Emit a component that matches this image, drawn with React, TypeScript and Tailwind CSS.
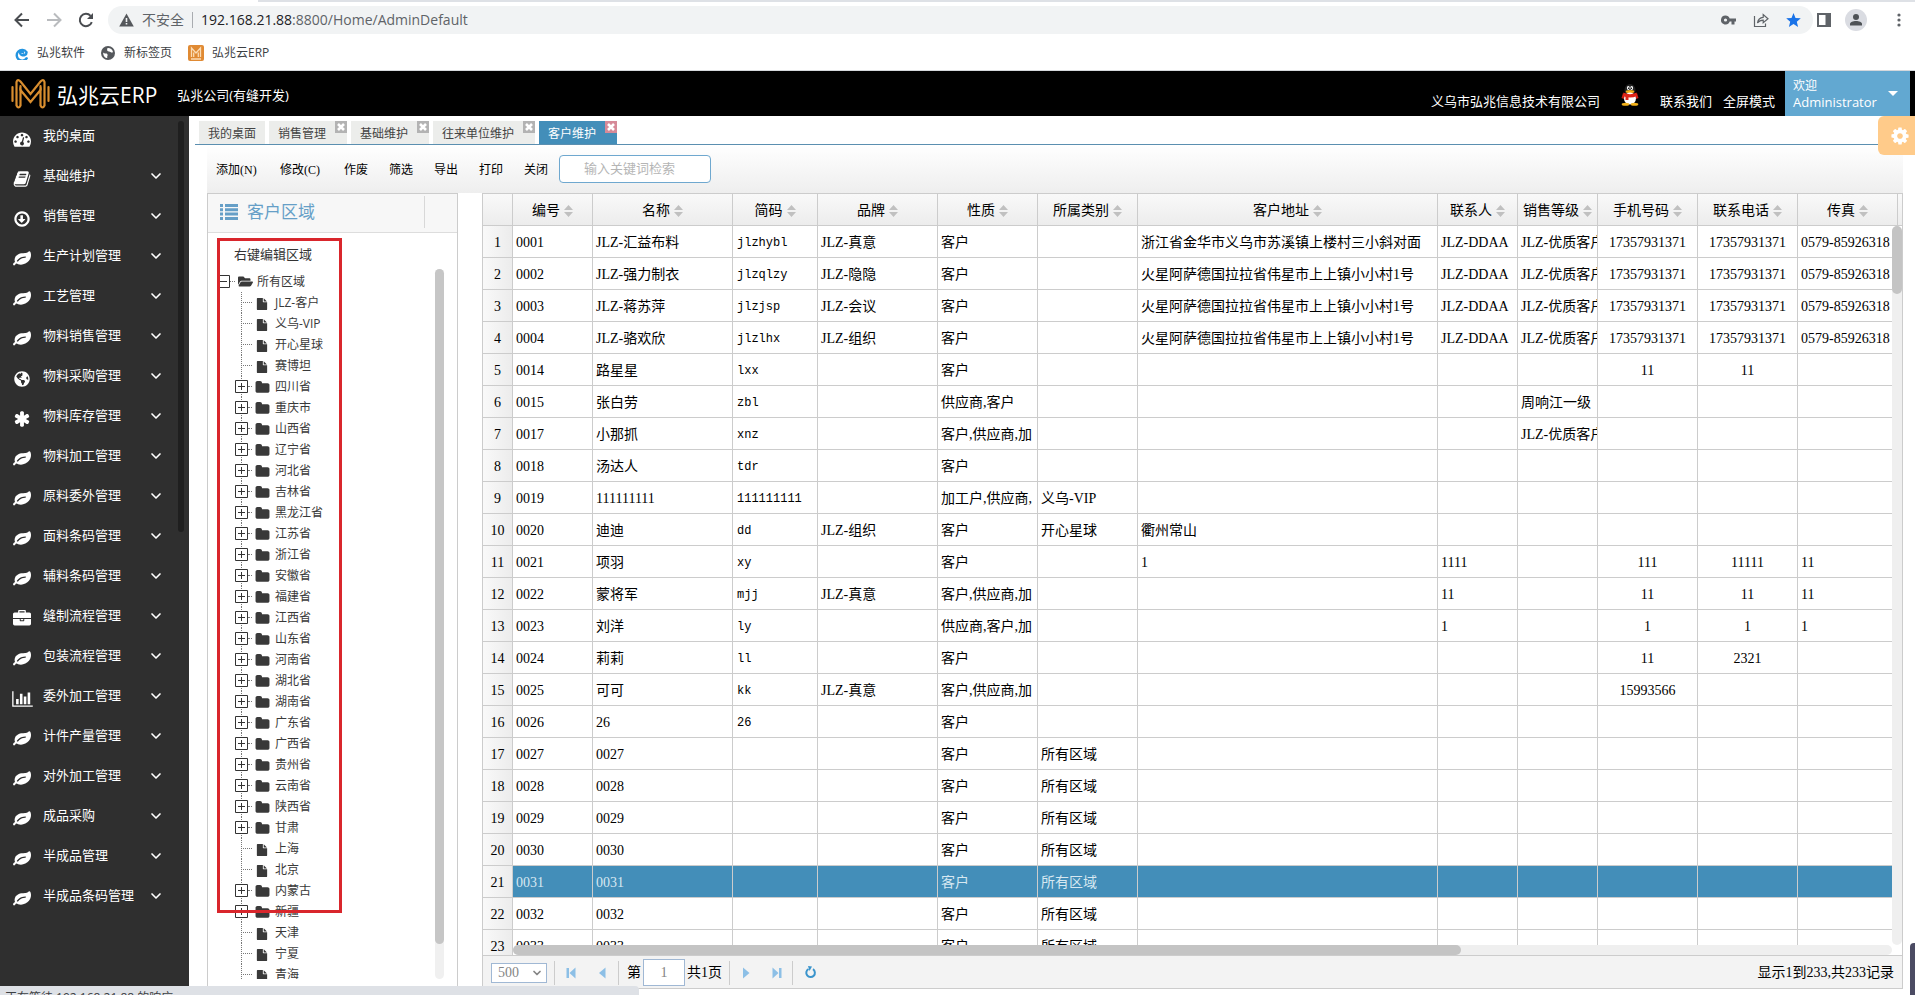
import { useState } from "react";
import type { ReactNode } from "react";
import { FaFolderOpen, FaGlobeAmericas } from "react-icons/fa";
import { ChevronDown } from "lucide-react";

const UI = "font-['Open_Sans','Noto_Sans_CJK_SC',sans-serif]";
const SONG = "font-['Liberation_Serif','Noto_Sans_CJK_SC',serif]";

const icons: Record<string, string> = {
  dashboard:
    "M384 1152q0-53-37.5-90.5t-90.5-37.5-90.5 37.5-37.5 90.5 37.5 90.5 90.5 37.5 90.5-37.5 37.5-90.5zm192-448q0-53-37.5-90.5t-90.5-37.5-90.5 37.5-37.5 90.5 37.5 90.5 90.5 37.5 90.5-37.5 37.5-90.5zm428 481l101-382q6-26-7.5-48.5t-38.5-29.5-48 6.5-30 39.5l-101 382q-60 5-107 43.5t-63 98.5q-20 77 20 146t117 89 146-20 89-117q16-60-6-117t-72-91zm660-33q0-53-37.5-90.5t-90.5-37.5-90.5 37.5-37.5 90.5 37.5 90.5 90.5 37.5 90.5-37.5 37.5-90.5zm-640-640q0-53-37.5-90.5t-90.5-37.5-90.5 37.5-37.5 90.5 37.5 90.5 90.5 37.5 90.5-37.5 37.5-90.5zm448 192q0-53-37.5-90.5t-90.5-37.5-90.5 37.5-37.5 90.5 37.5 90.5 90.5 37.5 90.5-37.5 37.5-90.5zm320 448q0 261-141 483-19 29-54 29h-1402q-35 0-54-29-141-221-141-483 0-182 71-348t191-286 286-191 348-71 348 71 286 191 191 286 71 348z",
  book: "M1703 478q40 57 18 129l-275 906q-19 64-76.5 107.5t-122.5 43.5h-923q-77 0-148.5-53.5t-99.5-131.5q-24-67-2-127 0-4 3-27t4-37q1-8-3-21.5t-3-19.5q2-11 8-21t16.5-23.5 16.5-23.5q23-38 45-91.5t30-91.5q3-10 .5-30t-.5-28q3-11 17-28t17-23q21-36 42-92t25-90q1-9-2.5-32t.5-28q4-13 22-30.5t22-22.5q19-26 42.5-84.5t27.5-96.5q1-8-3-25.5t-2-26.5q2-8 9-18t18-23 17-21q8-12 16.5-30.5t15-35 16-36 19.5-32 26.5-23.5 36-11.5 47.5 5.5l-1 3q38-9 51-9h761q74 0 114 56t18 130l-274 906q-36 119-71.5 153.5t-128.5 34.5h-869q-27 0-38 15-11 16-1 43 24 70 144 70h923q29 0 56-15.5t35-41.5l300-987q7-22 5-57 38 15 59 43zm-1064 2q-4 13 2 22.5t20 9.5h608q13 0 25.5-9.5t16.5-22.5l21-64q4-13-2-22.5t-20-9.5h-608q-13 0-25.5 9.5t-16.5 22.5zm-83 256q-4 13 2 22.5t20 9.5h608q13 0 25.5-9.5t16.5-22.5l21-64q4-13-2-22.5t-20-9.5h-608q-13 0-25.5 9.5t-16.5 22.5z",
  down: "M1216 928q0 14-10 24l-319 319q-10 9-23 9t-23-9l-320-320q-15-16-7-35 8-20 30-20h192v-352q0-14 9-23t23-9h192q14 0 23 9t9 23v352h192q14 0 23 9t9 23zm-320-576q-148 0-273 73t-198 198-73 273 73 273 198 198 273 73 273-73 198-198 73-273-73-273-198-198-273-73zm768 544q0 209-103 385.5t-279.5 279.5-385.5 103-385.5-103-279.5-279.5-103-385.5 103-385.5 279.5-279.5 385.5-103 385.5 103 279.5 279.5 103 385.5z",
  leaf: "M1280 704q0-26-19-45t-45-19q-172 0-318 49.5t-259.5 134-235.5 219.5q-19 21-19 45 0 26 19 45t45 19q24 0 45-19 27-24 74-71t67-66q137-124 268.5-176t313.5-52q26 0 45-19t19-45zm512-198q0 95-20 193-46 224-184.5 383t-357.5 268q-214 108-438 108-148 0-286-47-15-5-88-42t-96-37q-16 0-39.5 32t-45 70-52.5 70-60 32q-43 0-63.5-17.5t-45.5-59.5q-2-4-6-11t-5.5-10-3-9.5-1.5-13.5q0-35 31-73.5t68-65.5 68-56 31-48q0-4-14-38t-16-44q-9-51-9-104 0-115 43.5-220t119-184.5 170.5-139 204-95.5q55-18 145-25.5t179.5-9 178.5-6 163.5-24 113.5-56.5l29.5-29.5 29.5-28 27-20 36.5-16 43.5-4.5q39 0 70.5 46t47.5 112 24 124 8 96z",
  asterisk:
    "M1546 1050q46 26 59.5 77.5t-12.5 97.5l-64 110q-26 46-77.5 59.5t-97.5-12.5l-266-153v307q0 52-38 90t-90 38h-128q-52 0-90-38t-38-90v-307l-266 153q-46 26-97.5 12.5t-77.5-59.5l-64-110q-26-46-12.5-97.5t59.5-77.5l266-154-266-154q-46-26-59.5-77.5t12.5-97.5l64-110q26-46 77.5-59.5t97.5 12.5l266 153v-307q0-52 38-90t90-38h128q52 0 90 38t38 90v307l266-153q46-26 97.5-12.5t77.5 59.5l64 110q26 46 12.5 97.5t-59.5 77.5l-266 154z",
  briefcase:
    "M640 256h512v-128h-512v128zm1152 640v480q0 66-47 113t-113 47h-1472q-66 0-113-47t-47-113v-480h672v160q0 26 19 45t45 19h320q26 0 45-19t19-45v-160h672zm-768 0v128h-256v-128h256zm768-480v384h-1792v-384q0-66 47-113t113-47h352v-160q0-40 28-68t68-28h576q40 0 68 28t28 68v160h352q66 0 113 47t47 113z",
  folder:
    "M1728 608v704q0 92-66 158t-158 66h-1216q-92 0-158-66t-66-158v-960q0-92 66-158t158-66h320q92 0 158 66t66 158v32h672q92 0 158 66t66 158z",
  file: "M1152 512v-472q22 14 36 28l408 408q14 14 28 36h-472zm-128 32q0 40 28 68t68 28h544v1056q0 40-28 68t-68 28h-1344q-40 0-68-28t-28-68v-1600q0-40 28-68t68-28h800v544z",
  cog: "M1152 896q0-106-75-181t-181-75-181 75-75 181 75 181 181 75 181-75 75-181zm512-109v222q0 12-8 23t-20 13l-185 28q-19 54-39 91 35 50 107 138 10 12 10 25t-9 23q-27 37-99 108t-94 71q-12 0-26-9l-138-108q-44 23-91 38-16 136-29 186-7 28-36 28h-222q-14 0-24.5-8.5t-11.5-21.5l-28-184q-49-16-90-37l-141 107q-10 9-25 9-14 0-25-11-126-114-165-168-7-10-7-23 0-12 8-23 15-21 51-66.5t54-70.5q-27-50-41-99l-183-27q-13-2-21-12.5t-8-23.5v-222q0-12 8-23t19-13l186-28q14-46 39-92-40-57-107-138-10-12-10-24 0-10 9-23 26-36 98.5-107.5t94.5-71.5q13 0 26 10l138 107q44-23 91-38 16-136 29-186 7-28 36-28h222q14 0 24.5 8.5t11.5 21.5l28 184q49 16 90 37l142-107q9-9 24-9 13 0 25 10 129 119 165 170 7 8 7 22 0 12-8 23-15 21-51 66.5t-54 70.5q26 50 41 98l183 28q13 2 21 12.5t8 23.5z",
};

const Fa = ({ name, className }: { name: string; className?: string }) => (
  <svg viewBox="0 0 1792 1792" fill="currentColor" className={className} aria-hidden="true">
    <path d={icons[name]} />
  </svg>
);

const menu: [string, string][] = [
  ["dashboard", "我的桌面"],
  ["book", "基础维护"],
  ["down", "销售管理"],
  ["leaf", "生产计划管理"],
  ["leaf", "工艺管理"],
  ["leaf", "物料销售管理"],
  ["globe", "物料采购管理"],
  ["asterisk", "物料库存管理"],
  ["leaf", "物料加工管理"],
  ["leaf", "原料委外管理"],
  ["leaf", "面料条码管理"],
  ["leaf", "辅料条码管理"],
  ["briefcase", "缝制流程管理"],
  ["leaf", "包装流程管理"],
  ["chart", "委外加工管理"],
  ["leaf", "计件产量管理"],
  ["leaf", "对外加工管理"],
  ["leaf", "成品采购"],
  ["leaf", "半成品管理"],
  ["leaf", "半成品条码管理"],
];

const tabs = ["我的桌面", "销售管理", "基础维护", "往来单位维护", "客户维护"];
const tools = ["添加(N)", "修改(C)", "作废", "筛选", "导出", "打印", "关闭"];

const regions = [
  "JLZ-客户", "义乌-VIP", "开心星球", "赛博坦", "四川省", "重庆市", "山西省", "辽宁省", "河北省",
  "吉林省", "黑龙江省", "江苏省", "浙江省", "安徽省", "福建省", "江西省", "山东省", "河南省",
  "湖北省", "湖南省", "广东省", "广西省", "贵州省", "云南省", "陕西省", "甘肃", "上海", "北京",
  "内蒙古", "新疆", "天津", "宁夏", "青海",
];
const leaves = ["JLZ-客户", "义乌-VIP", "开心星球", "赛博坦", "上海", "北京", "天津", "宁夏", "青海"];

const columns = [
  { title: "编号", width: 80, cell: "pl-[3px]" },
  { title: "名称", width: 140, cell: "pl-[3px]" },
  { title: "简码", width: 85, cell: "pl-1 font-['Liberation_Mono',monospace] text-xs" },
  { title: "品牌", width: 120, cell: "pl-[3px]" },
  { title: "性质", width: 100, cell: "pl-[3px]" },
  { title: "所属类别", width: 100, cell: "pl-[3px]" },
  { title: "客户地址", width: 300, cell: "pl-[3px]" },
  { title: "联系人", width: 80, cell: "pl-[3px]" },
  { title: "销售等级", width: 80, cell: "pl-[3px]" },
  { title: "手机号码", width: 100, cell: "text-center" },
  { title: "联系电话", width: 100, cell: "text-center" },
  { title: "传真", width: 100, cell: "pl-[3px]" },
];

const mars = "火星阿萨德国拉拉省伟星市上上镇小小村1号";
const phone = "17357931371";
const fax = "0579-85926318";

const rows: string[][] = [
  ["0001", "JLZ-汇益布料", "jlzhybl", "JLZ-真意", "客户", "", "浙江省金华市义乌市苏溪镇上楼村三小斜对面", "JLZ-DDAA", "JLZ-优质客户", phone, phone, fax],
  ["0002", "JLZ-强力制衣", "jlzqlzy", "JLZ-隐隐", "客户", "", mars, "JLZ-DDAA", "JLZ-优质客户", phone, phone, fax],
  ["0003", "JLZ-蒋苏萍", "jlzjsp", "JLZ-会议", "客户", "", mars, "JLZ-DDAA", "JLZ-优质客户", phone, phone, fax],
  ["0004", "JLZ-骆欢欣", "jlzlhx", "JLZ-组织", "客户", "", mars, "JLZ-DDAA", "JLZ-优质客户", phone, phone, fax],
  ["0014", "路星星", "lxx", "", "客户", "", "", "", "", "11", "11", ""],
  ["0015", "张白劳", "zbl", "", "供应商,客户", "", "", "", "周响江一级", "", "", ""],
  ["0017", "小那抓", "xnz", "", "客户,供应商,加", "", "", "", "JLZ-优质客户", "", "", ""],
  ["0018", "汤达人", "tdr", "", "客户", "", "", "", "", "", "", ""],
  ["0019", "111111111", "111111111", "", "加工户,供应商,", "义乌-VIP", "", "", "", "", "", ""],
  ["0020", "迪迪", "dd", "JLZ-组织", "客户", "开心星球", "衢州常山", "", "", "", "", ""],
  ["0021", "项羽", "xy", "", "客户", "", "1", "1111", "", "111", "11111", "11"],
  ["0022", "蒙将军", "mjj", "JLZ-真意", "客户,供应商,加", "", "", "11", "", "11", "11", "11"],
  ["0023", "刘洋", "ly", "", "供应商,客户,加", "", "", "1", "", "1", "1", "1"],
  ["0024", "莉莉", "ll", "", "客户", "", "", "", "", "11", "2321", ""],
  ["0025", "可可", "kk", "JLZ-真意", "客户,供应商,加", "", "", "", "", "15993566", "", ""],
  ["0026", "26", "26", "", "客户", "", "", "", "", "", "", ""],
  ["0027", "0027", "", "", "客户", "所有区域", "", "", "", "", "", ""],
  ["0028", "0028", "", "", "客户", "所有区域", "", "", "", "", "", ""],
  ["0029", "0029", "", "", "客户", "所有区域", "", "", "", "", "", ""],
  ["0030", "0030", "", "", "客户", "所有区域", "", "", "", "", "", ""],
  ["0031", "0031", "", "", "客户", "所有区域", "", "", "", "", "", ""],
  ["0032", "0032", "", "", "客户", "所有区域", "", "", "", "", "", ""],
  ["0033", "0033", "", "", "客户", "所有区域", "", "", "", "", "", ""],
];

const BrowserBar = () => (
  <div className="shrink-0 border-b border-[#d5d8dc] bg-white">
    <div className="flex h-[2px]">
      <div className="w-[258px] rounded-tr-sm bg-white" />
      <div className="flex-1 bg-[#dee1e6]" />
    </div>
    <div className="flex h-9 items-center text-[#5f6368]">
      <div className="flex w-[108px] shrink-0 items-center gap-4 pl-[14px]">
        <button aria-label="后退">
          <svg width="16" height="16" viewBox="0 0 16 16" fill="none" stroke="#4a4d51" strokeWidth="2">
            <path d="M15 8H2M8 1.5L1.5 8L8 14.5" />
          </svg>
        </button>
        <button aria-label="前进">
          <svg width="16" height="16" viewBox="0 0 16 16" fill="none" stroke="#b9bbbe" strokeWidth="2">
            <path d="M1 8h13M8 1.5L14.5 8L8 14.5" />
          </svg>
        </button>
        <button aria-label="刷新">
          <svg width="16" height="16" viewBox="0 0 16 16" fill="none" stroke="#4a4d51" strokeWidth="2">
            <path d="M13.8 10.2A6.2 6.2 0 1 1 12.6 3.8" />
            <path d="M15 1v6H9z" fill="#4a4d51" stroke="none" />
          </svg>
        </button>
      </div>
      <div className="flex h-7 min-w-0 flex-1 items-center rounded-full bg-[#f1f3f4] pr-3 pl-[11px]">
        <svg width="15" height="14" viewBox="0 0 15 14" aria-hidden="true">
          <path d="M7.5 0.5L14.8 13.5H0.2z" fill="#55585c" />
          <path d="M6.7 5h1.6v4H6.7zM6.7 10h1.6v1.6H6.7z" fill="#f1f3f4" />
        </svg>
        <span className="ml-2 text-sm">不安全</span>
        <span className="mx-2 h-4 w-px bg-[#a9acb0]" />
        <span className="text-sm">
          <span className="text-[#202124]">192.168.21.88</span>:8800/Home/AdminDefault
        </span>
        <div className="ml-auto flex items-center gap-[17px]">
          <svg width="15" height="10" viewBox="0 0 15 10" aria-hidden="true">
            <path
              d="M4.5 0.5a4.5 4.5 0 1 0 4.2 6H10.5V9.5H13.5V6.5H15V3.5H8.7A4.5 4.5 0 0 0 4.5 0.5zM4.5 3.4a1.6 1.6 0 1 1 0 3.2a1.6 1.6 0 0 1 0-3.2z"
              fill="#5f6368"
              fillRule="evenodd"
            />
          </svg>
          <svg width="16" height="15" viewBox="0 0 16 15" fill="none" stroke="#5f6368" strokeWidth="1.2">
            <path d="M1.5 3V13.5H12.5V10.5" />
            <path d="M4.5 10C5 6.5 7 4.5 10.2 4.3V1.5L15 5.8L10.2 9.8V7.2C7.7 7.2 6 8 4.5 10z" />
          </svg>
          <svg width="15" height="14" viewBox="0 0 15 14" aria-hidden="true">
            <path d="M7.5 0L9.5 4.9L14.8 5.3L10.8 8.7L12.1 14L7.5 11.1L2.9 14L4.2 8.7L0.2 5.3L5.5 4.9z" fill="#1a73e8" />
          </svg>
        </div>
      </div>
      <div className="flex w-[102px] shrink-0 items-center justify-end gap-[14px] pr-3">
        <svg width="14" height="14" viewBox="0 0 14 14" aria-hidden="true">
          <path d="M0 0H14V14H0zM2 2V12H8.5V2z" fill="#5f6368" fillRule="evenodd" />
        </svg>
        <svg width="22" height="22" viewBox="0 0 22 22" aria-hidden="true">
          <circle cx="11" cy="11" r="11" fill="#dadce2" />
          <circle cx="11" cy="8" r="3" fill="#4e5256" />
          <path d="M5 16.5V15C5 13 8 12 11 12S17 13 17 15V16.5z" fill="#4e5256" />
        </svg>
        <svg width="22" height="14" viewBox="0 0 22 14" fill="#5f6368" aria-hidden="true">
          <circle cx="18" cy="2" r="1.6" />
          <circle cx="18" cy="7" r="1.6" />
          <circle cx="18" cy="12" r="1.6" />
        </svg>
      </div>
    </div>
    <nav className="flex h-8 items-center gap-4 pb-0.5 pl-[15px] text-xs text-[#3c4043]">
      <a href="#" className="flex items-center gap-[9px]">
        <svg width="13" height="13" viewBox="0 0 14 14" fill="none" stroke="#2394e0" strokeWidth="2.6">
          <path d="M13 11.2A5.800 5.800 0 1 1 12.4 5.5C12.600 8.500 9.500 9.200 7.500 8.700C5.500 8 5 6 6.500 5.200C8 4.500 9 6 8.500 7" />
        </svg>
        弘兆软件
      </a>
      <a href="#" className="flex items-center gap-[9px]">
        <svg width="14" height="14" viewBox="0 0 14 14" aria-hidden="true">
          <circle cx="7" cy="7" r="7" fill="#55585c" />
          <path d="M2.2 6.5C3.5 8.3 6 6.5 6.5 8.5S5.5 10.5 6.5 12C4 12 2 10 2.2 6.5zM6.5 2C9 1.8 11.5 3 12 6C10.5 7.5 9.5 5.5 8 5.5S5.5 4.5 6.5 2z" fill="#fff" />
        </svg>
        新标签页
      </a>
      <a href="#" className="flex items-center gap-2">
        <svg width="16" height="16" viewBox="0 0 16 16" fill="none" stroke="#fbdcb5" strokeWidth="1.3">
          <rect width="16" height="16" rx="2" fill="#e08a33" stroke="none" />
          <path d="M3.5 12V3L8 8L12.500 3V12M5.700 12V7.500M10.300 12V7.500M3 14h10" />
        </svg>
        弘兆云ERP
      </a>
    </nav>
  </div>
);

const Logo = () => (
  <svg width="39" height="32" viewBox="0 0 39 32" fill="none" stroke="#d98e2f" strokeWidth="2.2" strokeLinecap="round" aria-hidden="true">
    <path d="M1.500 9v14M37.500 9v14" />
    <path d="M5.500 27.500V4Q6.500 0.500 9.500 3.500L19.500 16L29.500 3.500Q32.500 0.500 33.500 4V27.500Q31.500 31.500 29.500 27.500V12L19.500 24L9.500 12V27.500Q7.500 31.500 5.500 27.500z" />
    <path d="M9.500 8v4M29.500 8v4" />
  </svg>
);

const Penguin = () => (
  <svg width="18" height="22" viewBox="0 0 18 22" aria-hidden="true">
    <ellipse cx="9" cy="6" rx="5.5" ry="6" fill="#222" />
    <ellipse cx="7.3" cy="4" rx="1.4" ry="2" fill="#fff" />
    <ellipse cx="10.7" cy="4" rx="1.4" ry="2" fill="#fff" />
    <circle cx="7.6" cy="4.2" r="0.7" fill="#000" />
    <circle cx="10.4" cy="4.2" r="0.7" fill="#000" />
    <ellipse cx="9" cy="7.5" rx="4.3" ry="1.5" fill="#f3b21b" />
    <path d="M2 9L0.5 14L3 15L4 11zM16 9L17.5 14L15 15L14 11z" fill="#c91c12" />
    <ellipse cx="9" cy="14.5" rx="6" ry="6" fill="#fff" />
    <path d="M2.5 8.5Q9 12 15.5 8.5L16 12Q9 15 2 12z" fill="#df2417" />
    <path d="M4.5 12h3v4h-3z" fill="#df2417" />
    <ellipse cx="4.5" cy="20.3" rx="3.8" ry="1.5" fill="#f3b21b" />
    <ellipse cx="13.5" cy="20.3" rx="3.8" ry="1.5" fill="#f3b21b" />
  </svg>
);

const Header = () => (
  <header className="flex h-[45px] shrink-0 items-center bg-black pr-[5px] pl-[11px] text-[13px] text-white">
    <Logo />
    <h1 className="ml-[7px] pt-0.5 text-[21px] leading-6">弘兆云ERP</h1>
    <span className="ml-5 pt-1">弘兆公司(有缝开发)</span>
    <div className="ml-auto flex items-center pt-3.5 leading-5">
      <span>义乌市弘兆信息技术有限公司</span>
      <a href="#" aria-label="QQ" className="mx-[21px] -mt-3">
        <Penguin />
      </a>
      <a href="#">联系我们</a>
      <a href="#" className="mr-[10px] ml-[11px]">全屏模式</a>
    </div>
    <button className="flex h-full w-[125px] items-center justify-between bg-[#62a8d1] pr-3 pl-2 text-left">
      <span className="text-[13px] leading-4">
        <small className="block text-xs leading-4">欢迎</small>
        Administrator
      </span>
      <span className="border-x-[5px] border-t-[5px] border-x-transparent border-t-white" />
    </button>
  </header>
);

const MenuIcon = ({ name }: { name: string }) => {
  if (name === "globe") return <FaGlobeAmericas className="size-4" />;
  if (name === "chart")
    return (
      <svg viewBox="0 0 2048 1792" fill="currentColor" className="h-[18px] w-[21px] shrink-0">
        <path d="M640 896v512h-256v-512h256zm384-512v1024h-256v-1024h256zm1024 1152v128h-2048v-1536h128v1408h1920zm-640-896v768h-256v-768h256zm384-384v1152h-256v-1152h256z" />
      </svg>
    );
  return <Fa name={name} className="size-[18px]" />;
};

const Sidebar = () => (
  <aside className="relative w-[189px] shrink-0 bg-[#2f2f2f] text-[13px] text-white">
    <ul>
      {menu.map(([icon, label], i) => (
        <li key={label}>
          <a href="#" className="flex h-10 items-center pr-[25px] pl-3">
            <span className="mt-1.5 flex w-5 justify-center">
              <MenuIcon name={icon} />
            </span>
            <span className="ml-[11px] flex-1">{label}</span>
            {i > 0 && <ChevronDown size={16} strokeWidth={2.5} />}
          </a>
        </li>
      ))}
    </ul>
    <div className="absolute top-[5px] right-[5px] h-[411px] w-[6px] rounded-full bg-[#1f1f1f]" />
  </aside>
);

const Tabs = () => {
  const [active, setActive] = useState("客户维护");
  return (
    <div className="ml-[6px] flex h-[29px] items-end gap-1 border-b border-[#5b8fb0] pl-1 text-xs">
      {tabs.map((t, i) => (
        <div
          key={t}
          className={`flex h-[23px] items-start ${t === active ? "bg-[#438eb9] text-white" : "bg-[#ecedeb] text-[#444]"}`}
        >
          <button className="h-full px-[9px] pt-0.5" onClick={() => setActive(t)}>
            {t}
          </button>
          {i > 0 && (
            <button
              aria-label={`关闭${t}`}
              className={`flex size-3 items-center justify-center ${t === active ? "bg-[#d68a98]" : "bg-[#b3b3b3]"}`}
            >
              <svg width="8" height="8" viewBox="0 0 8 8" stroke="#fff" strokeWidth="2.6">
                <path d="M1 1L7 7M7 1L1 7" />
              </svg>
            </button>
          )}
        </div>
      ))}
    </div>
  );
};

const Toggle = ({ open }: { open?: boolean }) => (
  <svg width="13" height="13" viewBox="0 0 13 13" fill="none" stroke="#333" className="relative bg-white">
    <path d={open ? "M0.5 0.5h12v12h-12zM3 6.5h7" : "M0.5 0.5h12v12h-12zM3 6.5h7M6.5 3v7"} />
  </svg>
);

const RegionPanel = () => (
  <section className="relative flex w-[251px] shrink-0 flex-col border border-b-0 border-[#ccc] bg-white">
    <div className="flex h-[39px] shrink-0 items-center border-b border-[#ddd] bg-[#f7f7f7] pb-0.5 pl-3 text-[#669fc7]">
      <svg width="18" height="16" viewBox="0 0 18 16" fill="currentColor" aria-hidden="true">
        <path d="M0 0h3v3H0zM5 0h13v3H5zM0 4.3h3v3H0zM5 4.3h13v3H5zM0 8.6h3v3H0zM5 8.6h13v3H5zM0 13h3v3H0zM5 13h13v3H5z" />
      </svg>
      <h2 className="ml-[9px] text-[17px]">客户区域</h2>
      <span className="mr-8 ml-auto h-8 w-px bg-[#d8d8d8]" />
    </div>
    <p className={`shrink-0 pt-3 pl-[26px] text-[13px] leading-5 text-[#333] ${SONG}`}>右键编辑区域</p>
    <div className="relative mt-1 mb-[10px] ml-[9px] min-h-0 flex-1 overflow-hidden text-xs text-[#393939]">
      <ul>
        <li className="flex h-[21px] items-center pt-1">
          <Toggle open />
          <span className="w-[5px] border-t border-dotted border-[#777]" />
          <FaFolderOpen className="ml-[3px] size-[15px]" />
          <span className="ml-1">所有区域</span>
        </li>
      </ul>
      <ul className="pt-[2px] pl-[18px]">
        {regions.map((r) => {
          const leaf = leaves.includes(r);
          return (
            <li key={r} className="relative flex h-[21px] items-center">
              <span className="absolute left-[6px] h-full border-l border-dotted border-[#777]" />
              {leaf ? (
                <>
                  <span className="ml-[6px] w-[11px] border-t border-dotted border-[#777]" />
                  <svg viewBox="0 0 1792 1792" fill="currentColor" className="mt-0.5 ml-1 size-3">
                    <path d={icons.file} />
                  </svg>
                  <span className="ml-[7px]">{r}</span>
                </>
              ) : (
                <>
                  <Toggle />
                  <span className="w-1 border-t border-dotted border-[#777]" />
                  <Fa name="folder" className="mt-0.5 ml-[3px] size-[15px]" />
                  <span className="ml-[5px]">{r}</span>
                </>
              )}
            </li>
          );
        })}
      </ul>
      <div className="absolute inset-y-0 right-[13px] w-[9px] rounded-full bg-[#f0f0f0]">
        <div className="h-[95%] rounded-full bg-[#c6c6c6]" />
      </div>
    </div>
    {/* highlighted area */}
    <div className="pointer-events-none absolute top-[44px] bottom-[76px] left-[9px] w-[125px] border-3 border-[#d9262c]" />
  </section>
);

const PagerButton = ({ label, children }: { label: string; children: ReactNode }) => (
  <button aria-label={label} className="flex w-[31px] justify-center text-[#8cbfe6]">
    <svg width="12" height="12" viewBox="0 0 12 12" fill="currentColor">
      {children}
    </svg>
  </button>
);

const Divider = () => <span className="h-6 w-px bg-[#ccc]" />;

const Pager = () => (
  <div className="flex h-[34px] shrink-0 items-center border-y border-[#ccc] bg-[#f3f3f3] px-2 pt-px text-sm text-black">
    <div className="relative mr-[7px]">
      <select aria-label="每页条数" className="block h-5 w-14 appearance-none border border-[#a0b8d4] bg-white pl-[6px] text-sm leading-4 text-[#858585]">
        <option>500</option>
      </select>
      <ChevronDown size={12} strokeWidth={3.5} className="pointer-events-none absolute top-1 right-1 text-[#858585]" />
    </div>
    <Divider />
    <PagerButton label="首页">
      <path d="M1.5 1h2.500v10H1.500zM10.500 0.500v11L4.500 6z" />
    </PagerButton>
    <PagerButton label="上一页">
      <path d="M9.5 0.500v11L3 6z" />
    </PagerButton>
    <span className="w-px" />
    <Divider />
    <span className="mr-[2px] ml-2">第</span>
    <input aria-label="页码" defaultValue="1" className="h-[27px] w-[42px] border border-[#a0b8d4] bg-white text-center text-sm text-[#858585]" />
    <span className="mr-[7px] ml-[2px]">共1页</span>
    <Divider />
    <PagerButton label="下一页">
      <path d="M3 0.500v11L9.500 6z" />
    </PagerButton>
    <PagerButton label="末页">
      <path d="M1.5 0.500v11L7.500 6zM8 1h2.500v10H8z" />
    </PagerButton>
    <Divider />
    <button aria-label="刷新" className="ml-[11px]">
      <svg width="13" height="13" viewBox="0 0 13 13" fill="none" stroke="#3a94cc" strokeWidth="2">
        <path d="M9 3.200A4.300 4.300 0 1 1 4.500 3" />
        <path d="M4 0l4 0.500L5.500 5z" fill="#3a94cc" stroke="none" />
      </svg>
    </button>
    <span className="ml-auto">显示1到233,共233记录</span>
  </div>
);

const CustomerGrid = () => {
  const [selected, setSelected] = useState(20);
  return (
    <section className={`flex min-w-0 flex-1 flex-col border border-b-0 border-[#ccc] bg-white ${SONG}`}>
      <div className="relative min-h-0 flex-1 overflow-hidden">
        <table className="w-full table-fixed border-separate border-spacing-0 text-sm text-black">
          <colgroup>
            <col style={{ width: 30 }} />
            {columns.map((c) => (
              <col key={c.title} style={{ width: c.width }} />
            ))}
            <col />
          </colgroup>
          <thead>
            <tr className="h-8 bg-linear-to-b from-[#f9f9f9] to-[#ececec]">
              <th className="border-r border-b border-[#ccc]" />
              {columns.map((c) => (
                <th key={c.title} className="border-r border-b border-[#ccc] p-0 pt-0.5 font-normal">
                  <span className="flex items-center justify-center gap-1 whitespace-nowrap">
                    {c.title}
                    <svg width="9" height="12" viewBox="0 0 9 12" fill="#c0c0c0" aria-hidden="true">
                      <path d="M4.5 0L9 5H0zM4.5 12L9 7H0z" />
                    </svg>
                  </span>
                </th>
              ))}
              <th className="border-b border-[#ccc] p-0" />
            </tr>
          </thead>
          <tbody>
            {rows.map((r, i) => (
              <tr
                key={r[0]}
                onClick={() => setSelected(i)}
                className={`h-8 ${i === selected ? "bg-[#438eb9] text-[#d7e8f1]" : ""}`}
              >
                <td className="border-r border-b border-[#ccc] bg-linear-to-r from-[#f9f9f9] to-[#ececec] p-0 pt-0.5 text-center text-black">
                  {i + 1}
                </td>
                {r.map((v, j) => (
                  <td
                    key={j}
                    className={`overflow-hidden border-r border-b border-[#ccc] pt-0.5 pr-0 pb-0 whitespace-nowrap ${columns[j].cell}`}
                  >
                    {v}
                  </td>
                ))}
                <td className="border-b border-[#ccc] p-0" />
              </tr>
            ))}
          </tbody>
        </table>
        <div className="absolute top-8 right-0 bottom-0 w-[10px] bg-white pb-[10px]">
          <div className="h-full rounded-full bg-[#efefef]">
            <div className="h-[68px] rounded-full bg-[#c4c4c4]" />
          </div>
        </div>
        <div className="absolute right-[10px] bottom-0 left-[30px] h-[10px] bg-white">
          <div className="h-full rounded-full bg-[#efefef]">
            <div className="h-full w-11/16 rounded-full bg-[#c4c4c4]" />
          </div>
        </div>
      </div>
      <Pager />
    </section>
  );
};

const App = () => {
  return (
    <div className={`relative flex h-screen flex-col overflow-hidden bg-white ${UI}`}>
      <BrowserBar />
      <Header />
      <div className="flex min-h-0 flex-1">
        <Sidebar />
        <main className="flex min-w-0 flex-1 flex-col">
          <Tabs />
          <div className="flex min-h-0 flex-1 flex-col pr-3 pb-[6px] pl-[18px]">
            <div className={`flex h-12 shrink-0 items-center bg-linear-to-b from-white to-[#eeeeee] pl-[9px] text-xs text-black ${SONG}`}>
              <div className="flex gap-[21px] pt-px">
                {tools.map((t) => (
                  <button key={t} className={t.length > 2 ? "w-[43px] text-left" : ""}>
                    {t}
                  </button>
                ))}
              </div>
              <input
                aria-label="输入关键词检索"
                placeholder="输入关键词检索"
                className="ml-[11px] h-7 w-[152px] rounded border border-[#6fa8cf] bg-white pl-6 text-[13px] placeholder:text-[#b5b5b5]"
              />
            </div>
            <div className="flex min-h-0 flex-1 gap-6">
              <RegionPanel />
              <CustomerGrid />
            </div>
          </div>
        </main>
      </div>

      {/* settings handle */}
      <button aria-label="设置" className="absolute top-[116px] right-0 flex h-[39px] w-[37px] items-center rounded-l-md bg-[#ffcb8a] pl-3 text-white">
        <Fa name="cog" className="size-5" />
      </button>
      <div className="absolute right-0 bottom-0 h-[52px] w-[5px] rounded-tl bg-[#4b4b63]" />
      {/* browser status text */}
      <div className="absolute bottom-0 left-0 h-[9px] w-[639px] overflow-hidden rounded-tr bg-[#dee1e6] pt-1 pl-[5px] text-xs leading-4 text-[#3c4043]">
        正在等待 192.168.21.88 的响应...
      </div>
    </div>
  );
};

export default App;
